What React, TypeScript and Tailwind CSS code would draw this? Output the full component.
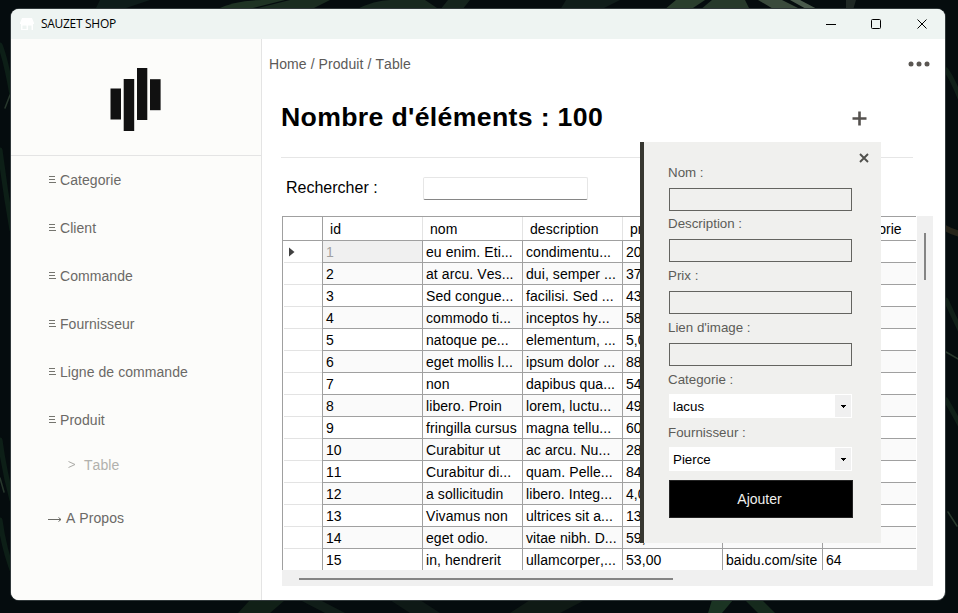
import React from "react";

const rows: [string, string, string, string, string][] = [
  ["1", "eu enim. Eti...", "condimentu...", "20,00", ""],
  ["2", "at arcu. Ves...", "dui, semper ...", "37,00", ""],
  ["3", "Sed congue...", "facilisi. Sed ...", "43,00", ""],
  ["4", "commodo ti...", "inceptos hy...", "58,00", ""],
  ["5", "natoque pe...", "elementum, ...", "5,00", ""],
  ["6", "eget mollis l...", "ipsum dolor ...", "88,00", ""],
  ["7", "non", "dapibus qua...", "54,00", ""],
  ["8", "libero. Proin", "lorem, luctu...", "49,00", ""],
  ["9", "fringilla cursus", "magna tellu...", "60,00", ""],
  ["10", "Curabitur ut", "ac arcu. Nu...", "28,00", ""],
  ["11", "Curabitur di...", "quam. Pelle...", "84,00", ""],
  ["12", "a sollicitudin", "libero. Integ...", "4,00", ""],
  ["13", "Vivamus non", "ultrices sit a...", "13,00", ""],
  ["14", "eget odio.", "vitae nibh. D...", "59,00", ""],
  ["15", "in, hendrerit", "ullamcorper,...", "53,00", "baidu.com/site"],
];

const menu = ["Categorie", "Client", "Commande", "Fournisseur", "Ligne de commande", "Produit"];

function Burger() {
  return (
    <svg width="8" height="9" viewBox="0 0 8 9" className="mr-1 mb-px shrink-0" shapeRendering="crispEdges">
      <path d="M1 1.5h6M1 4.5h6M1 7.5h7" stroke="#75756f" strokeWidth="1" />
    </svg>
  );
}

function Backdrop() {
  return (
    <svg className="absolute inset-0" width="958" height="613" viewBox="0 0 958 613">
      <rect width="958" height="613" fill="#050c0e" />
      <g fill="#1f3324">
        <path d="M100 0H150L120 10H95Z" fill="#0e1c1a" />
        <path d="M215 10Q235 0 262 0H285L245 10Z" />
        <path d="M250 10L290 0H330L310 10Z" fill="#1a2c20" />
        <path d="M355 10Q375 0 390 0H425L440 10Z" fill="#18281f" />
        <path d="M440 10L448 0H470L462 10Z" fill="#15241d" />
        <path d="M560 10L566 0H620L600 10Z" fill="#101d1a" />
        <path d="M664 10L676 0H705L690 10Z" fill="#2a3e2d" />
        <path d="M700 10L712 0H745L750 10Z" fill="#27392b" />
        <path d="M775 10L758 0H782L802 10Z" fill="#3a4a3c" />
        <path d="M808 10L790 0H800L819 10Z" fill="#4a5a4c" />
        <path d="M846 10L846 0H856L853 10Z" fill="#1f2825" />
        <path d="M250 600H285L270 613H238Z" fill="#112017" />
        <path d="M300 600H320L345 613H325Z" fill="#101d18" />
        <path d="M390 600H420L440 613H410Z" fill="#0e1916" />
        <path d="M530 600H585L560 613H510Z" fill="#0f1a15" />
        <path d="M712 600H733L722 613H708Z" fill="#1b3423" />
        <path d="M745 600H762L775 613H758Z" fill="#162a1d" />
      </g>
      <g fill="none" strokeLinecap="round">
        <path d="M0 45Q6 60 12 95M0 150Q5 190 12 230M0 440Q4 470 12 500M0 520Q4 550 14 575" stroke="#0d1f17" strokeWidth="5" />
        <path d="M946 70Q952 78 960 98M946 300L960 330M946 400Q952 410 960 425" stroke="#101f18" strokeWidth="5" />
        <path d="M945 228Q952 232 960 234" stroke="#26241a" strokeWidth="6" />
        <path d="M946 352L960 360M948 512L957 526M0 478L4 492M10 95L5 108" stroke="#28382d" strokeWidth="1.5" />
      </g>
    </svg>
  );
}

function Sidebar() {
  return (
    <aside className="w-[251px] shrink-0 border-r border-[#e4e4e4] bg-[#fcfcfa] text-[14px] tracking-[0.06px] text-[#6b6966]">
      <div className="flex h-[117px] justify-center border-b border-[#e4e4e4] pt-[28px]">
        <svg width="52" height="66" viewBox="0 0 52 66" className="mr-[1px]">
          <g fill="#111" transform="translate(0 1)">
            <rect x="0.5" y="20.5" width="10.5" height="31" />
            <rect x="13.7" y="11" width="10.5" height="52" />
            <rect x="27" y="0" width="10.3" height="52" />
            <rect x="40" y="11.2" width="10.6" height="31" />
          </g>
        </svg>
      </div>
      <nav className="pl-[37px]">
        {menu.map((item) => (
          <div key={item} className="flex h-12 items-center">
            <Burger />
            <span>{item}</span>
          </div>
        ))}
        <div className="flex h-[42px] items-center pl-5 text-[#b1b1ad]">
          <svg width="8" height="7" viewBox="0 0 8 7" className="mb-[2px]">
            <path d="M0.5 0.5L7 3.5L0.5 6.5" fill="none" stroke="#aaaaa6" />
          </svg>
          <span className="ml-2">Table</span>
        </div>
        <div className="flex h-16 items-center">
          <svg width="14" height="7" viewBox="0 0 14 7" className="mr-1 mt-[2px]">
            <path d="M0 3.5H13M10.5 1.5L13 3.5L10.5 5.5" fill="none" stroke="#6b6b66" />
          </svg>
          <span>A Propos</span>
        </div>
      </nav>
    </aside>
  );
}

function Grid() {
  return (
    <div className="ml-5 flex h-[370px] w-[651px] flex-col bg-[#f0f0f0] text-[14px] tracking-[0.08px] text-black">
      <div className="flex h-[354px]">
        <div className="h-[354px] w-[634px] shrink-0 overflow-hidden border-l border-t border-[#a0a0a0] bg-white">
          <div className="flex h-[24px] w-[740px] border-b border-[#a0a0a0] leading-[25px]">
            <div className="w-10 shrink-0 border-r border-[#a0a0a0]" />
            <div className="w-[100px] shrink-0 border-r border-[#e3e3e3] pl-[7px]">id</div>
            <div className="w-[100px] shrink-0 border-r border-[#e3e3e3] pl-[7px]">nom</div>
            <div className="w-[100px] shrink-0 border-r border-[#e3e3e3] pl-[7px]">description</div>
            <div className="w-[100px] shrink-0 border-r border-[#e3e3e3] pl-[7px]">prix</div>
            <div className="w-[100px] shrink-0 border-r border-[#e3e3e3] pl-[7px]" />
            <div className="w-[100px] shrink-0 pl-[7px] tracking-normal">idCategorie</div>
          </div>
          {rows.map((r, i) => (
            <div
              key={r[0]}
              className={`flex h-[22px] w-[740px] whitespace-pre leading-[22px] ${i % 2 ? "bg-[#fafafa]" : "bg-white"}`}
            >
              <div className="w-10 shrink-0 border-r border-[#a0a0a0] bg-white pl-px">
                <div className="flex h-[22px] items-center border-b border-[#e3e3e3] pl-[5px]">
                  {i === 0 && (
                    <svg width="6" height="10" viewBox="0 0 6 10">
                      <path d="M0 0.5L5.5 5L0 9.5Z" fill="#404040" />
                    </svg>
                  )}
                </div>
              </div>
              <div
                className={`w-[100px] shrink-0 border-b border-r border-[#a0a0a0] pl-[3px] ${i === 0 ? "bg-[#f0f0f0] text-[#a0a0a0]" : ""}`}
              >
                {r[0]}
              </div>
              <div className="w-[100px] shrink-0 border-b border-r border-[#a0a0a0] pl-[3px]">{r[1]}</div>
              <div className="w-[100px] shrink-0 border-b border-r border-[#a0a0a0] pl-[3px]">{r[2]}</div>
              <div className="w-[100px] shrink-0 border-b border-r border-[#a0a0a0] pl-[3px]">{r[3]}</div>
              <div className="w-[100px] shrink-0 border-b border-r border-[#a0a0a0] pl-[3px]">{r[4]}</div>
              <div className="w-[100px] shrink-0 border-b border-[#a0a0a0] pl-[3px]">{i === 14 ? "64" : ""}</div>
            </div>
          ))}
        </div>
        <div className="w-px bg-white" />
        <div className="ml-[7px] mt-[17px] h-[47px] w-[2px] bg-[#858585]" />
      </div>
      <div className="ml-[17px] mt-[8px] h-[2px] w-[374px] bg-[#858585]" />
    </div>
  );
}

function Field({ label, tall }: { label: string; tall?: boolean }) {
  return (
    <div className={tall ? "h-[52px]" : "h-[51px]"}>
      <div className="h-[23px] leading-[16px]">{label}</div>
      <div className="ml-px h-[23px] w-[183px] border border-[#646460]" />
    </div>
  );
}

function Combo({ label, value }: { label: string; value: string }) {
  return (
    <div className="h-[53px]">
      <div className="h-[22px] leading-[16px]">{label}</div>
      <div className="ml-px flex h-6 w-[183px] items-center justify-between border border-white bg-white pl-[3px] text-black">
        <span className="pt-px">{value}</span>
        <span className="flex h-[22px] w-4 items-center justify-center bg-[#f0f0f0]">
          <svg width="5" height="3" viewBox="0 0 5 3">
            <path d="M0 0H5V1H4V2H3V3H2V2H1V1H0Z" fill="#000" shapeRendering="crispEdges" />
          </svg>
        </span>
      </div>
    </div>
  );
}

function AddPanel() {
  return (
    <div className="absolute left-[640px] top-[142px] h-[401px] w-[241px] border-l-4 border-[#373731] bg-[#f0f0ee] pl-6 text-[13.33px] text-[#5c5c58]">
      <svg className="absolute left-[215px] top-[11px]" width="10" height="10" viewBox="0 0 10 10">
        <path d="M1 1L9 9M9 1L1 9" stroke="#50504c" strokeWidth="1.9" />
      </svg>
      <div className="h-[230px] pt-[23px]">
        <Field label="Nom :" />
        <Field label="Description :" tall />
        <Field label="Prix :" tall />
        <Field label="Lien d'image :" />
      </div>
      <Combo label="Categorie :" value="lacus" />
      <Combo label="Fournisseur :" value="Pierce" />
      <button className="ml-px mt-[2px] flex h-[38px] w-[184px] items-center justify-center border border-[#242424] bg-black pr-[3px] text-[14px] text-[#f0f0ee]">
        Ajouter
      </button>
    </div>
  );
}

export default function App() {
  return (
    <div className="relative h-[613px] w-[958px] overflow-hidden px-[11px] pt-[9px] font-['Liberation_Sans',Arial,sans-serif] [font-kerning:none]">
      <Backdrop />
      <div className="relative h-[591px] w-[934px] overflow-hidden rounded-lg bg-white shadow-[0_0_0_1px_#30383a]">
        <header className="flex h-[30px] items-center bg-[#eef4f2]">
          <svg width="14" height="12" viewBox="0 0 14 12" className="ml-[9px]">
            <path d="M2 0H12L14 5V6H13V12H11.5V7.5H8V12H1V6H0V5ZM2.5 7.5V11H6.5V7.5Z" fill="#fff" fillRule="evenodd" />
          </svg>
          <span className="ml-[7px] font-['Open_Sans','Noto_Sans',sans-serif] text-[12px] tracking-[-0.3px] text-black">SAUZET SHOP</span>
          <svg className="ml-auto mr-[17px]" width="102" height="11" viewBox="0 0 102 11" fill="none" stroke="#000">
            <path d="M0 5.5H10" />
            <rect x="45.5" y="0.5" width="9" height="9" rx="1" />
            <path d="M91.5 0.5L100.5 9.5M100.5 0.5L91.5 9.5" />
          </svg>
        </header>
        <div className="flex h-[561px]">
          <Sidebar />
          <main className="min-w-0 flex-1">
            <div className="flex h-[51px] items-center justify-between pl-[7px] pr-[15px] text-[14px] text-[#5c5a58]">
              <span className="tracking-[0.08px]">Home / Produit / Table</span>
              <svg width="22" height="6" viewBox="0 0 22 6" fill="#5a5652" className="mb-[2px]">
                <circle cx="3" cy="3" r="2.5" />
                <circle cx="11" cy="3" r="2.5" />
                <circle cx="19" cy="3" r="2.5" />
              </svg>
            </div>
            <div className="ml-[19px] flex h-[68px] w-[632px] justify-between border-b border-[#e6e6e6]">
              <h1 className="pt-[11px] text-[26.67px] font-bold leading-[32px] tracking-[0.33px] text-black">Nombre d'éléments : 100</h1>
              <svg width="15" height="15" viewBox="0 0 15 15" className="mr-[46px] mt-[21px]">
                <path d="M7.5 0.5V14.5M0.5 7.5H14.5" stroke="#55524f" strokeWidth="2.6" />
              </svg>
            </div>
            <div className="flex h-[58px] items-center pl-6 text-[16px] text-black">
              <span className="w-[137px] pt-px">Rechercher :</span>
              <div className="mt-[2px] h-[23px] w-[165px] rounded-[2px] border border-[#e6e6e6] border-b-[#868686]" />
            </div>
            <Grid />
          </main>
        </div>
      </div>
      <AddPanel />
    </div>
  );
}
